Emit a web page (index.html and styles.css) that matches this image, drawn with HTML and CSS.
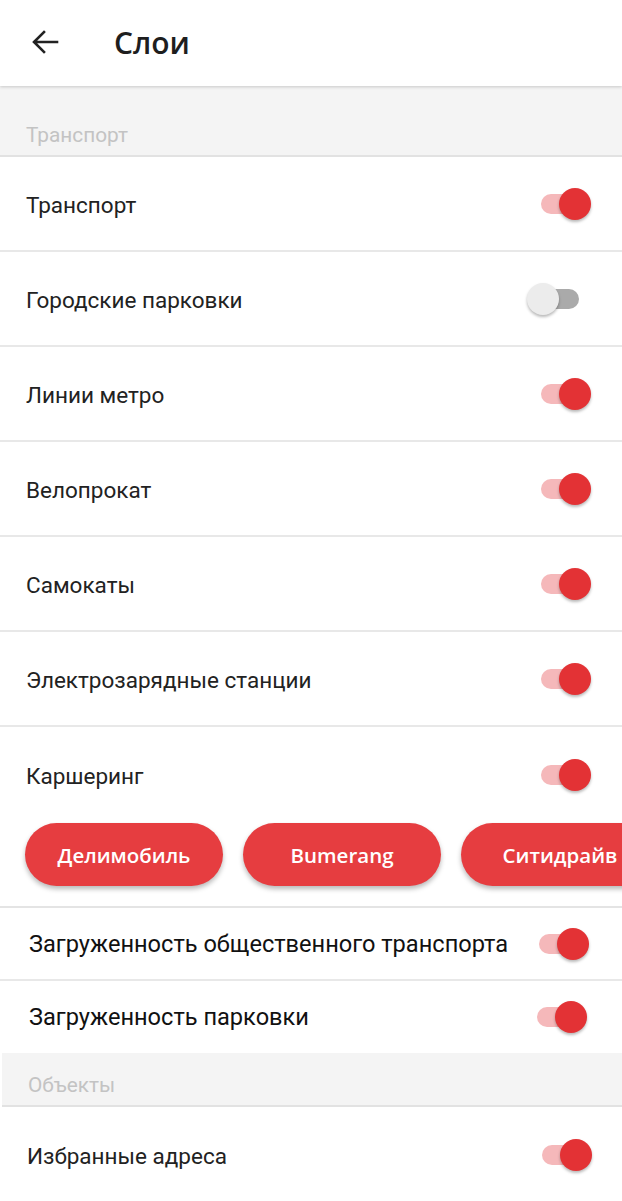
FILE: index.html
```html
<!DOCTYPE html>
<html lang="ru">
<head>
<meta charset="utf-8">
<link rel="stylesheet" href="styles.css">
</head>
<body>
<div class="screen">
  <header class="appbar">
    <svg class="back" width="28" height="24" viewBox="0 0 28 24"><path d="M26 12H4M13 2L3 12l10 10" fill="none" stroke="#222" stroke-width="2.6" stroke-linecap="square"/></svg>
    <h1 class="title">Слои</h1>
  </header>

  <div class="section">Транспорт</div>
  <div class="row"><span class="label">Транспорт</span><span class="toggle on"></span></div>
  <div class="row"><span class="label">Городские парковки</span><span class="toggle off"></span></div>
  <div class="row"><span class="label">Линии метро</span><span class="toggle on"></span></div>
  <div class="row"><span class="label">Велопрокат</span><span class="toggle on"></span></div>
  <div class="row"><span class="label">Самокаты</span><span class="toggle on"></span></div>
  <div class="row"><span class="label">Электрозарядные станции</span><span class="toggle on"></span></div>
  <div class="row noborder"><span class="label">Каршеринг</span><span class="toggle on"></span></div>
  <div class="chips">
    <span class="chip">Делимобиль</span>
    <span class="chip">Bumerang</span>
    <span class="chip">Ситидрайв</span>
  </div>
  <div class="row small"><span class="label big">Загруженность общественного транспорта</span><span class="toggle on t2"></span></div>
  <div class="row small noborder last"><span class="label big">Загруженность парковки</span><span class="toggle on t3"></span></div>
  <div class="section s2">Объекты</div>
  <div class="row fav"><span class="label">Избранные адреса</span><span class="toggle on t4"></span></div>
</div>
</body>
</html>
```
FILE: styles.css
```css
html, body { margin: 0; padding: 0; background: #fff; }
body { font-family: Roboto, "Noto Sans", sans-serif; color: #212121; }
.screen { width: 622px; height: 1201px; overflow: hidden; display: flex; flex-direction: column; }
.appbar { height: 86px; flex: none; display: flex; align-items: center; background: #fff; box-shadow: 0 1px 3px rgba(0,0,0,0.18); position: relative; z-index: 2; }
.back { margin-left: 31px; margin-top: -2px; }
.title { margin: 0 0 0 55px; font-family: "Open Sans", sans-serif; font-weight: 600; font-size: 30px; color: #1e1e1e; position: relative; top: -1px; }
.section { flex: none; height: 69px; background: #f4f4f4; border-bottom: 2px solid #e2e2e2; display: flex; align-items: flex-end; padding-left: 26px; font-size: 20.8px; color: #c3c3c3; line-height: 39px; }
.section.s2 { height: 52px; margin-left: 2px; padding-left: 26px; line-height: 40px; }
.row { flex: none; height: 93px; border-bottom: 2px solid #e8e8e8; display: flex; align-items: center; justify-content: space-between; padding: 0 29px 0 26px; }
.row.noborder { border-bottom: none; height: 95px; }
.label { font-size: 22.5px; color: #222; position: relative; top: 1px; }
.label.big { font-size: 23.6px; color: #111; margin-left: 3px; top: 0; }
.row.small { height: 71px; }
.row.small.last { height: 72px; }
.row.fav { height: 96px; border-bottom: none; }
.row.fav .label { margin-left: 1px; }
.toggle { position: relative; width: 52px; height: 34px; flex: none; }
.toggle::before { content: ""; position: absolute; left: 0; top: 7px; width: 38px; height: 20px; border-radius: 10px; }
.toggle::after { content: ""; position: absolute; top: 1px; width: 32px; height: 32px; border-radius: 50%; box-shadow: 0 2px 3px rgba(0,0,0,0.28); }
.toggle.on::before { background: #f5b8ba; }
.toggle.on::after { left: 18px; background: #e33235; }
.toggle.off::before { background: #aaaaaa; left: 0; }
.toggle.off::after { left: -14px; background: #ececec; }
.toggle.t2 { margin-right: 2px; }
.toggle.t3 { margin-right: 4px; }
.toggle.t4 { margin-right: -1px; }
.chips { flex: none; height: 86px; display: flex; gap: 20px; padding: 1px 0 0 25px; box-sizing: border-box; border-bottom: 2px solid #e4e4e4; overflow: hidden; }
.chip { flex: none; width: 198px; height: 63px; border-radius: 32px; background: #e63d40; color: #fff; font-family: "Open Sans", sans-serif; font-weight: 600; font-size: 20.5px; display: flex; align-items: center; justify-content: center; box-shadow: 0 3px 5px rgba(0,0,0,0.28); }
```
